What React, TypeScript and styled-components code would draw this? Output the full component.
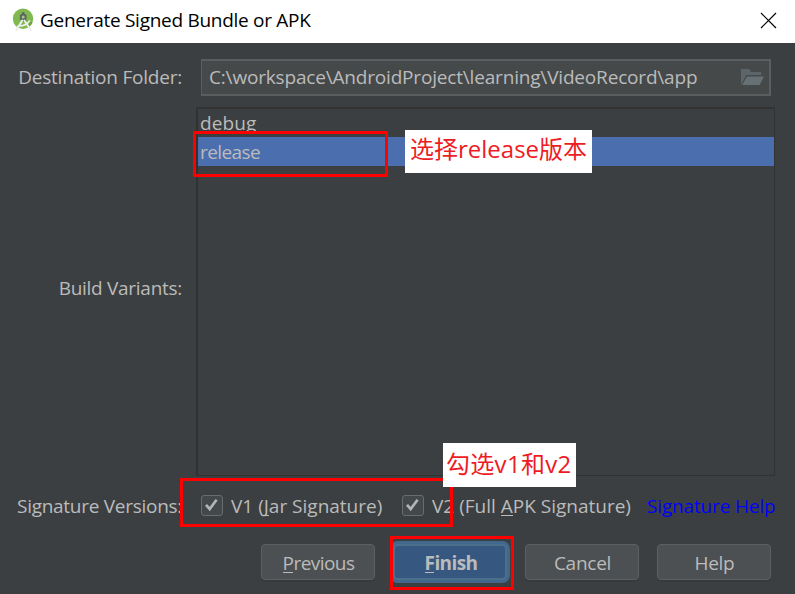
import React from 'react';
import styled, { createGlobalStyle, css } from 'styled-components';

const GlobalStyle = createGlobalStyle`
  * { box-sizing: border-box; }
  body { margin: 0; background: #3c3f41; overflow: hidden; }
`;

const Dialog = styled.div`
  position: relative;
  display: flex;
  flex-direction: column;
  height: 594px;
  overflow: hidden;
  background: #3c3f41;
  color: #bbbbbb;
  font-family: 'Open Sans', 'Noto Sans CJK SC', sans-serif;
  font-size: 19px;
  white-space: nowrap;
`;

const TitleBar = styled.header`
  display: flex;
  align-items: center;
  flex: none;
  height: 43px;
  padding: 0 18px 3px 12px;
  background: #ffffff;
  color: #000000;
`;

const Title = styled.h1`
  flex: 1;
  margin: 0 0 0 6px;
  font-size: 19px;
  font-weight: 400;
  line-height: 40px;
  letter-spacing: -0.28px;
`;

const CloseButton = styled.button`
  display: flex;
  padding: 0;
  border: 0;
  background: none;
`;

const Form = styled.main`
  display: flex;
  flex-direction: column;
  padding-left: 16px;
`;

const FormRow = styled.div<{ $height: number; $drop?: number }>`
  display: flex;
  align-items: center;
  height: ${(p) => p.$height}px;
  padding-top: ${(p) => p.$drop ?? 0}px;
`;

const Label = styled.span<{ $track: number; $raise?: number }>`
  flex: none;
  width: 166px;
  padding-bottom: ${(p) => p.$raise ?? 0}px;
  text-align: right;
  line-height: 36px;
  letter-spacing: ${(p) => p.$track}px;
`;

const PathField = styled.div`
  display: flex;
  align-items: center;
  justify-content: space-between;
  width: 570px;
  height: 37px;
  margin-left: 19px;
  padding: 0 5px 0 7px;
  border: 2px solid #5b5e5f;
  border-left-width: 1px;
  background: #45494a;
  line-height: 33px;
  letter-spacing: -0.18px;
`;

const VariantList = styled.div`
  width: 579px;
  height: 369px;
  margin-left: 14px;
  border: solid #323232;
  border-width: 2px 1px 1px 2px;
`;

const Variant = styled.div<{ $selected?: boolean; $track: number }>`
  height: ${(p) => (p.$selected ? 29 : 28)}px;
  padding-left: 2px;
  line-height: ${(p) => (p.$selected ? 31 : 28)}px;
  letter-spacing: ${(p) => p.$track}px;
  background: ${(p) => (p.$selected ? '#4b6eaf' : 'transparent')};
`;

const CheckOption = styled.label<{ $width: number }>`
  display: flex;
  align-items: center;
  gap: 8px;
  width: ${(p) => p.$width}px;
  line-height: 36px;
`;

const CheckBox = styled.span`
  display: flex;
  flex: none;
  width: 22px;
  height: 21px;
  border: 1.5px solid #696c6d;
  border-radius: 3px;
  background: #43494a;
`;

const Options = styled.div`
  display: flex;
  margin-left: 19px;
`;

const HelpLink = styled.a`
  color: #0000ff;
  line-height: 36px;
  letter-spacing: -0.15px;
`;

const Mnemonic = styled.span`
  display: inline-block;
  line-height: 19px;
  box-shadow: inset 0 -1px 0 #bbbbbb;
`;

const ButtonBar = styled.footer`
  display: flex;
  gap: 18px;
  padding: 17px 0 0 261px;
`;

const Button = styled.button<{ $primary?: boolean; $track: number }>`
  width: 114px;
  height: 36px;
  padding: 2px 0 0 1px;
  border: 1.5px solid #5e6060;
  border-radius: 4px;
  background: #4c5052;
  box-shadow: 0 2px 0 #373a3b;
  color: #bbbbbb;
  font: 400 19px 'Open Sans', sans-serif;
  line-height: 32px;
  letter-spacing: ${(p) => p.$track}px;
  ${(p) =>
    p.$primary &&
    css`
      padding-left: 2px;
      border: 2px solid #4c708c;
      border-radius: 5px;
      background: #365880;
      box-shadow: 0 0 0 3px #43688d;
      font-weight: 700;
      line-height: 30px;
    `}
`;

type Box = { $x: number; $y: number; $w: number; $h: number };

const Highlight = styled.div<Box>`
  position: absolute;
  left: ${(p) => p.$x}px;
  top: ${(p) => p.$y}px;
  width: ${(p) => p.$w}px;
  height: ${(p) => p.$h}px;
  border: 3px solid #ff0000;
`;

const Note = styled.div<Box & { $pad: number; $line: number; $track?: number }>`
  position: absolute;
  left: ${(p) => p.$x}px;
  top: ${(p) => p.$y}px;
  width: ${(p) => p.$w}px;
  height: ${(p) => p.$h}px;
  padding-left: ${(p) => p.$pad}px;
  background: #ffffff;
  color: #ed1c24;
  font-size: 24px;
  line-height: ${(p) => p.$line}px;
  letter-spacing: ${(p) => p.$track ?? 0}px;
`;

const StudioLogo = () => (
  <svg width="22" height="24" viewBox="0 0 22 24">
    <circle cx="11" cy="10.7" r="10.2" fill="#80b94f" />
    <path d="M12 11 20.5 14.5A10.2 10.2 0 0 1 17 18.8Z" fill="#6da43f" />
    <path d="M9.9 4.2h2.6v1.6l2 1.2v4.6l-2.2 1.8h-2.2L7.9 11.600V7l2-1.200z" fill="#5b6660" />
    <circle cx="11.2" cy="9" r="1.5" fill="#a5cb83" />
    <path d="M10.200 12.500 4.400 22M12.400 12.500 18.900 22" stroke="#eceeec" strokeWidth="2" strokeLinecap="round" />
    <path d="M5.500 17.800Q13.500 18.800 17.800 12.400" fill="none" stroke="#eceeec" strokeWidth="1.8" />
  </svg>
);

const FolderIcon = () => (
  <svg width="23" height="18" viewBox="0 0 23 18">
    <path d="M0 16.5V1h8l2 3h10v3H5.2L.6 16.5z" fill="#5c6569" />
    <path d="M6 8.5h17L18.6 17H1.2z" fill="#667075" />
  </svg>
);

const CheckMark = () => (
  <svg width="19" height="18" viewBox="0 0 19 18">
    <path d="M4 8.8 7.7 13 14.6 3.8" fill="none" stroke="#b4b4b4" strokeWidth="2.7" />
  </svg>
);

export default function App() {
  return (
    <Dialog>
      <GlobalStyle />
      <TitleBar>
        <StudioLogo />
        <Title>Generate Signed Bundle or APK</Title>
        <CloseButton aria-label="Close">
          <svg width="17" height="17" viewBox="0 0 17 17">
            <path d="M1 1 16 16M16 1 1 16" stroke="#000" strokeWidth="1.2" />
          </svg>
        </CloseButton>
      </TitleBar>

      <Form>
        <FormRow $height={64} $drop={4}>
          <Label $track={-0.22}>Destination Folder:</Label>
          <PathField>
            <span>{'C:\\workspace\\AndroidProject\\learning\\VideoRecord\\app'}</span>
            <FolderIcon />
          </PathField>
        </FormRow>
        <FormRow $height={369}>
          <Label $track={-0.28} $raise={8}>Build Variants:</Label>
          <VariantList>
            <Variant $track={0.1}>debug</Variant>
            <Variant $selected $track={-0.6}>release</Variant>
          </VariantList>
        </FormRow>
        <FormRow $height={51} $drop={8}>
          <Label $track={-0.28}>Signature Versions:</Label>
          <Options>
            <CheckOption $width={201}>
              <CheckBox><CheckMark /></CheckBox>
              <span>V1 (<Mnemonic>J</Mnemonic>ar Signature)</span>
            </CheckOption>
            <CheckOption $width={245}>
              <CheckBox><CheckMark /></CheckBox>
              <span>V2 (Full <Mnemonic>A</Mnemonic>PK Signature)</span>
            </CheckOption>
            <HelpLink>Signature Help</HelpLink>
          </Options>
        </FormRow>
      </Form>

      <ButtonBar>
        <Button $track={-0.55}><Mnemonic>P</Mnemonic>revious</Button>
        <Button $primary $track={-0.6}><Mnemonic>F</Mnemonic>inish</Button>
        <Button $track={-0.26}>Cancel</Button>
        <Button $track={-0.3}>Help</Button>
      </ButtonBar>

      <Highlight $x={193} $y={131} $w={195} $h={46} />
      <Note $x={405} $y={130} $w={187} $h={43} $pad={5} $line={38}>选择release版本</Note>
      <Highlight $x={180} $y={478} $w={273} $h={49} />
      <Note $x={443} $y={443} $w={133} $h={44} $pad={3} $line={41} $track={0.3}>勾选v1和v2</Note>
      <Highlight $x={390} $y={536} $w={124} $h={54} />
    </Dialog>
  );
}
